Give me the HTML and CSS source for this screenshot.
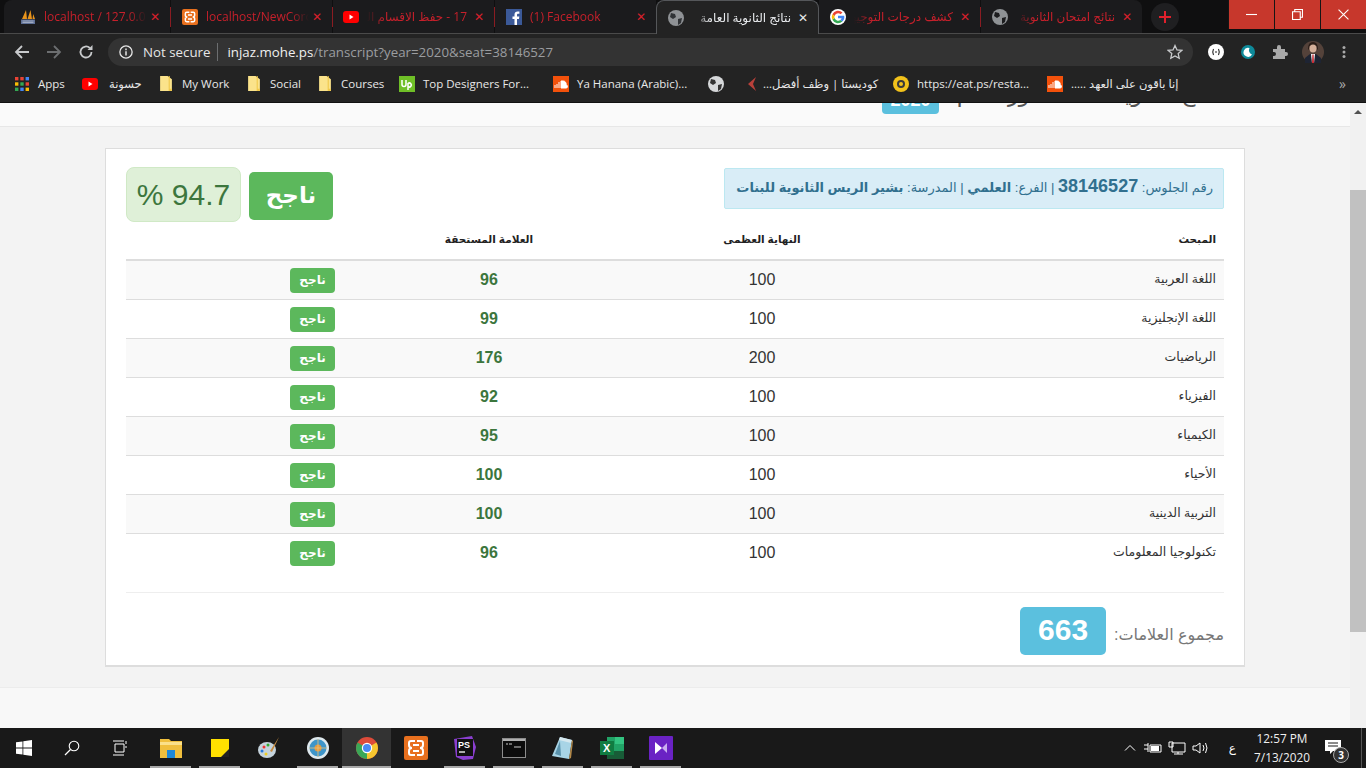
FILE: index.html
```html
<!DOCTYPE html>
<html lang="ar">
<head>
<meta charset="utf-8">
<title>نتائج الثانوية العامة</title>
<link rel="stylesheet" href="styles.css">
</head>
<body>
<div class="browser">
  <div class="tabstrip">
    <div class="tab t1">
      <svg class="fav" viewBox="0 0 16 16"><path d="M2 10 6 1l1 9zM7.500 10l3-9 1.500 9zM12.500 10l.7-5 1.800 5z" fill="#e8941c"/><rect x="1" y="10.500" width="14" height="4.500" fill="#5f7096"/><path d="M2.500 12h11M2.500 13.500h11" stroke="#c9d0de" stroke-width=".6"/></svg>
      <span class="tt">localhost / 127.0.0.1</span><span class="x">✕</span>
    </div>
    <i class="sep"></i>
    <div class="tab t2">
      <svg class="fav" viewBox="0 0 24 24"><rect width="24" height="24" rx="3" fill="#e8701e"/><path d="M11 5H7a2 2 0 0 0-2 2v2a3 3 0 0 0 3 3 3 3 0 0 0-3 3v2a2 2 0 0 0 2 2h4M13 5h4a2 2 0 0 1 2 2v2a3 3 0 0 1-3 3 3 3 0 0 1 3 3v2a2 2 0 0 1-2 2h-4M9 9h6M9 15h6" fill="none" stroke="#fff" stroke-width="2.200"/></svg>
      <span class="tt">localhost/NewCorona</span><span class="x">✕</span>
    </div>
    <i class="sep"></i>
    <div class="tab t3">
      <svg class="fav" viewBox="0 0 16 16"><rect y="2" width="16" height="12" rx="3" fill="#f00"/><path d="M6.500 5.500v5l4-2.500z" fill="#fff"/></svg>
      <span class="tt" dir="rtl">17 - حفظ الاقسام الرئيسية</span><span class="x">✕</span>
    </div>
    <i class="sep"></i>
    <div class="tab t4">
      <svg class="fav" viewBox="0 0 16 16"><rect width="16" height="16" fill="#3b5998"/><path d="M11 16v-6h2l.3-2.500H11V6c0-.8.3-1.200 1.200-1.200h1.200V2.600C13 2.500 12.300 2.500 11.600 2.500 9.800 2.500 8.500 3.600 8.500 5.700v1.800H6.500V10h2v6z" fill="#fff"/></svg>
      <span class="tt">(1) Facebook</span><span class="x">✕</span>
    </div>
    <div class="tab active">
      <svg class="fav" viewBox="0 0 16 16"><circle cx="8" cy="8" r="8" fill="#8f9295"/><path d="M3 3l4 1 1 3-3 2-3-2zM10 9l4-1-1 5-3 2z" fill="#303336"/></svg>
      <span class="tt" dir="rtl">نتائج الثانوية العامة</span><span class="x">✕</span>
    </div>
    <div class="tab t6">
      <svg class="fav" viewBox="0 0 16 16"><circle cx="8" cy="8" r="8" fill="#fff"/><path d="M8 4.300a3.700 3.700 0 0 1 2.600 1L12.500 3.500A6.300 6.300 0 0 0 2.400 5.200l2.200 1.700A3.700 3.700 0 0 1 8 4.300z" fill="#ea4335"/><path d="M4.600 9.100 2.400 10.800a6.300 6.300 0 0 0 10 1.700l-2.100-1.600A3.700 3.700 0 0 1 4.600 9.100z" fill="#34a853"/><path d="M2.400 5.200a6.300 6.300 0 0 0 0 5.600l2.200-1.700a3.700 3.700 0 0 1 0-2.200z" fill="#fbbc05"/><path d="M14.200 6.700H8v2.600h3.600a3 3 0 0 1-1.300 1.600l2.100 1.600a6.200 6.200 0 0 0 1.800-5.800z" fill="#4285f4"/></svg>
      <span class="tt" dir="rtl">كشف درجات التوجيهي</span><span class="x">✕</span>
    </div>
    <i class="sep"></i>
    <div class="tab t7">
      <svg class="fav" viewBox="0 0 16 16"><circle cx="8" cy="8" r="8" fill="#8f9295"/><path d="M3 3l4 1 1 3-3 2-3-2zM10 9l4-1-1 5-3 2z" fill="#1c1c1e"/></svg>
      <span class="tt" dir="rtl">نتائج امتحان الثانوية</span><span class="x">✕</span>
    </div>
    <div class="newtab"><svg viewBox="0 0 12 12"><path d="M6 0v12M0 6h12" stroke="#e0202c" stroke-width="2"/></svg></div>
    <div class="winctl">
      <div class="wbtn"><svg viewBox="0 0 10 10"><path d="M0 5h10" stroke="#fff"/></svg></div>
      <div class="wbtn"><svg viewBox="0 0 10 10"><path d="M2.500 2.500V.5h7v7h-2M.5 2.500h7v7h-7z" fill="none" stroke="#fff"/></svg></div>
      <div class="wbtn"><svg viewBox="0 0 10 10"><path d="M.5.5l9 9M9.500.5l-9 9" stroke="#fff"/></svg></div>
    </div>
  </div>
  <div class="toolbar">
    <svg class="nav" viewBox="0 0 16 16"><path d="M15 8H2M8 2 2 8l6 6" fill="none" stroke="#c8cacc" stroke-width="1.800"/></svg>
    <svg class="nav" viewBox="0 0 16 16"><path d="M1 8h13M8 2l6 6-6 6" fill="none" stroke="#6c6e70" stroke-width="1.800"/></svg>
    <svg class="nav" viewBox="0 0 16 16"><path d="M13.500 8a5.500 5.500 0 1 1-1.700-4" fill="none" stroke="#c8cacc" stroke-width="1.800"/><path d="M14.500 1v5h-5z" fill="#c8cacc"/></svg>
    <div class="omnibox">
      <svg class="info" viewBox="0 0 16 16"><circle cx="8" cy="8" r="7" fill="none" stroke="#e6e6e6" stroke-width="1.500"/><path d="M8 7v5M8 4v2" stroke="#e6e6e6" stroke-width="1.700"/></svg>
      <span class="secure">Not secure</span>
      <i class="osep"></i>
      <span class="url"><b>injaz.mohe.ps</b>/transcript?year=2020&amp;seat=38146527</span>
      <svg class="star" viewBox="0 0 16 16"><path d="M8 1.500l2 4.400 4.800.5-3.600 3.200 1 4.700L8 11.900l-4.200 2.400 1-4.700L1.200 6.400 6 5.900z" fill="none" stroke="#c8cacc" stroke-width="1.300"/></svg>
    </div>
    <div class="exts">
      <svg class="ext" viewBox="0 0 16 16"><circle cx="8" cy="8" r="8" fill="#fff"/><path d="M5.500 5Q4 8 5.500 11M10.500 5Q12 8 10.500 11M7 8h2" fill="none" stroke="#222" stroke-width="1.100"/></svg>
      <svg class="ext" viewBox="0 0 16 16"><circle cx="8" cy="8" r="7" fill="#0e8a9a"/><path d="M9.500 4a4.500 4.500 0 1 0 2.500 6.500A4.500 4.500 0 0 1 9.500 4z" fill="#fff"/></svg>
      <svg class="ext" viewBox="0 0 16 16"><path d="M1 5h4V3a2 2 0 0 1 4 0v2h4v3h1a2 2 0 0 1 0 4h-1v3H1v-3h1a2 2 0 0 0 0-4H1z" fill="#a9a9a9"/></svg>
      <svg class="avatar" viewBox="0 0 22 22"><circle cx="11" cy="11" r="11" fill="#54423a"/><path d="M6 8Q6 1 11 1t5 7l-1 1V5H7v4z" fill="#2c1e18"/><ellipse cx="11" cy="7.500" rx="3.500" ry="4" fill="#d5b09a"/><path d="M3 22v-5l5-4h6l5 4v5z" fill="#1e2433"/><path d="M9 13h4l-1 9h-2z" fill="#fff"/><path d="M10.400 13.500h1.200l.4 8.500h-2z" fill="#c4262e"/></svg>
      <svg class="dots" viewBox="0 0 4 12"><circle cx="2" cy="1.500" r="1.500" fill="#aaa"/><circle cx="2" cy="6" r="1.500" fill="#aaa"/><circle cx="2" cy="10.500" r="1.500" fill="#aaa"/></svg>
    </div>
  </div>
  <div class="bookmarks">
    <div class="bm b-apps">
      <svg class="bi" viewBox="0 0 14 14"><rect width="3.400" height="3.400" fill="#ea4335"/><rect x="5.300" width="3.400" height="3.400" fill="#ea4335"/><rect x="10.600" width="3.400" height="3.400" fill="#4285f4"/><rect y="5.300" width="3.400" height="3.400" fill="#fbbc05"/><rect x="5.300" y="5.300" width="3.400" height="3.400" fill="#34a853"/><rect x="10.600" y="5.300" width="3.400" height="3.400" fill="#ea4335"/><rect y="10.600" width="3.400" height="3.400" fill="#34a853"/><rect x="5.300" y="10.600" width="3.400" height="3.400" fill="#4285f4"/><rect x="10.600" y="10.600" width="3.400" height="3.400" fill="#fbbc05"/></svg>
      Apps
    </div>
    <div class="bm b-yt"><svg class="bi" viewBox="0 0 16 16"><rect y="2" width="16" height="12" rx="3" fill="#f00"/><path d="M6.500 5.500v5l4-2.500z" fill="#fff"/></svg><span dir="rtl">حسونة</span></div>
    <div class="bm b-work"><svg class="bf" viewBox="0 0 11 14"><path d="M0 0h7l4 3v11H0z" fill="#fbe38b"/><path d="M8 0h1v12h2v2H8z" fill="#f0c84a"/></svg>My Work</div>
    <div class="bm b-soc"><svg class="bf" viewBox="0 0 11 14"><path d="M0 0h7l4 3v11H0z" fill="#fbe38b"/><path d="M8 0h1v12h2v2H8z" fill="#f0c84a"/></svg>Social</div>
    <div class="bm b-cou"><svg class="bf" viewBox="0 0 11 14"><path d="M0 0h7l4 3v11H0z" fill="#fbe38b"/><path d="M8 0h1v12h2v2H8z" fill="#f0c84a"/></svg>Courses</div>
    <div class="bm b-up"><svg class="bi" viewBox="0 0 16 16"><rect width="16" height="16" fill="#6fbf27"/><path d="M3 4v4.500a2 2 0 0 0 4 0V4M9 14V7.500a2 2 0 1 1 0 3" fill="none" stroke="#fff" stroke-width="1.500"/></svg>Top Designers For...</div>
    <div class="bm b-sc1"><svg class="bi" viewBox="0 0 16 16"><rect width="16" height="16" fill="#f3510b"/><path d="M2 9v3M4 8v4M6 6v6M8 5h2a3 3 0 0 1 3 4 1.500 1.500 0 0 1 0 3H8z" stroke="#fff" fill="#fff"/></svg>Ya Hanana (Arabic)...</div>
    <div class="bm b-glo"><svg class="bi" viewBox="0 0 16 16"><circle cx="8" cy="8" r="8" fill="#d6d8da"/><path d="M3 3l4 1 1 3-3 2-3-2zM10 9l4-1-1 5-3 2z" fill="#333"/></svg></div>
    <div class="bm b-cod"><svg class="bc" viewBox="0 0 10 16"><path d="M9 1 1 8l8 7-3-7z" fill="#b8403a"/></svg><span dir="rtl">كوديستا | وظف أفضل...</span></div>
    <div class="bm b-eat"><svg class="bi" viewBox="0 0 16 16"><circle cx="8" cy="8" r="8" fill="#f2c21b"/><circle cx="8" cy="8" r="4" fill="#3a3a3a"/><circle cx="8" cy="8" r="2" fill="#f2c21b"/></svg>https://eat.ps/resta...</div>
    <div class="bm b-sc2"><svg class="bi" viewBox="0 0 16 16"><rect width="16" height="16" fill="#f3510b"/><path d="M2 9v3M4 8v4M6 6v6M8 5h2a3 3 0 0 1 3 4 1.500 1.500 0 0 1 0 3H8z" stroke="#fff" fill="#fff"/></svg><span dir="rtl">إنا باقون على العهد .....</span></div>
    <div class="more">»</div>
  </div>
</div>

<div class="viewport">
  <div class="page">
    <div class="headline">
      <span class="yearbadge">2020</span>
      <h1 dir="rtl">نتائج الثانوية العامة لدورة عام</h1>
    </div>
    <main class="card" dir="rtl">
      <div class="top">
        <div class="alert">رقم الجلوس: <b class="seat">38146527</b> | الفرع: <b>العلمي</b> | المدرسة: <b>بشير الريس الثانوية للبنات</b></div>
        <div class="result">
          <span class="bigpass">ناجح</span>
          <span class="pct" dir="ltr">% 94.7</span>
        </div>
      </div>
      <table class="marks">
        <thead><tr><th class="c1">المبحث</th><th class="c2">النهاية العظمى</th><th class="c3">العلامة المستحقة</th><th class="c4"></th></tr></thead>
        <tbody>
          <tr><td class="sub">اللغة العربية</td><td class="max">100</td><td class="got">96</td><td class="st"><span class="pass">ناجح</span></td></tr>
          <tr><td class="sub">اللغة الإنجليزية</td><td class="max">100</td><td class="got">99</td><td class="st"><span class="pass">ناجح</span></td></tr>
          <tr><td class="sub">الرياضيات</td><td class="max">200</td><td class="got">176</td><td class="st"><span class="pass">ناجح</span></td></tr>
          <tr><td class="sub">الفيزياء</td><td class="max">100</td><td class="got">92</td><td class="st"><span class="pass">ناجح</span></td></tr>
          <tr><td class="sub">الكيمياء</td><td class="max">100</td><td class="got">95</td><td class="st"><span class="pass">ناجح</span></td></tr>
          <tr><td class="sub">الأحياء</td><td class="max">100</td><td class="got">100</td><td class="st"><span class="pass">ناجح</span></td></tr>
          <tr><td class="sub">التربية الدينية</td><td class="max">100</td><td class="got">100</td><td class="st"><span class="pass">ناجح</span></td></tr>
          <tr><td class="sub">تكنولوجيا المعلومات</td><td class="max">100</td><td class="got">96</td><td class="st"><span class="pass">ناجح</span></td></tr>
        </tbody>
      </table>
      <div class="total"><span class="tlabel">مجموع العلامات:</span><span class="tbadge">663</span></div>
    </main>
    <div class="foot"></div>
  </div>
  <div class="scrollbar">
    <div class="arrow"></div>
    <div class="thumb"></div>
  </div>
</div>

<div class="taskbar">
  <svg class="tk start" viewBox="0 0 16 16"><path d="M0 2.300 6.500 1.400v6.200H0zM7.300 1.300 16 0v7.600H7.300zM0 8.400h6.500v6.200L0 13.700zM7.300 8.400H16V16l-8.700-1.300z" fill="#fff"/></svg>
  <svg class="tk search" viewBox="0 0 16 16"><circle cx="10" cy="6" r="4.800" fill="none" stroke="#fff" stroke-width="1.100"/><path d="M6.500 9.500 1 15" stroke="#fff" stroke-width="1.200"/></svg>
  <svg class="tk tview" viewBox="0 0 16 16"><path d="M3 4h9v8H3zM1 1h11M1 15h11M14 1v3M14 6v2" fill="none" stroke="#fff"/></svg>
  <div class="apps">
    <div class="app on"><svg viewBox="0 0 24 24"><path d="M1 3h9l2 2h11v17H1z" fill="#f0bf3e"/><rect x="1" y="6" width="22" height="3" fill="#fbe08a"/><rect x="8" y="14" width="8" height="8" fill="#1e88d8"/></svg></div>
    <div class="app on"><svg viewBox="0 0 24 24"><rect x="3" y="3" width="18" height="18" fill="#ffe000"/><path d="M21 13v8h-8z" fill="#222"/></svg></div>
    <div class="app"><svg viewBox="0 0 24 24"><ellipse cx="10" cy="14" rx="9" ry="8" fill="#c5d3dc"/><circle cx="7" cy="11" r="1.500" fill="#e33"/><circle cx="11" cy="9" r="1.500" fill="#3a3"/><circle cx="5" cy="15" r="1.500" fill="#27d"/><circle cx="9" cy="18" r="1.500" fill="#ec2"/><path d="M22 1l-7 15-2-1z" fill="#c68a3f"/></svg></div>
    <div class="app on"><svg viewBox="0 0 24 24"><circle cx="12" cy="12" r="11" fill="#dfe9ee"/><circle cx="12" cy="12" r="8.500" fill="#3e95c9"/><circle cx="12" cy="12" r="3.500" fill="#e89a3c"/><path d="M12 3v18M3 12h18" stroke="#e8c27a" stroke-width=".8"/></svg></div>
    <div class="app on cur"><svg viewBox="0 0 24 24"><circle cx="12" cy="12" r="11" fill="#dd4b3a"/><path d="M12 12 21.500 6.500A11 11 0 0 1 12 23z" fill="#f7c62f"/><path d="M12 12 12 23A11 11 0 0 1 2.500 6.500z" fill="#3aa757"/><circle cx="12" cy="12" r="5.200" fill="#fff"/><circle cx="12" cy="12" r="4" fill="#4a8af4"/></svg></div>
    <div class="app"><svg viewBox="0 0 24 24"><rect width="24" height="24" rx="2" fill="#e8701e"/><path d="M11 5H7a2 2 0 0 0-2 2v2a3 3 0 0 0 3 3 3 3 0 0 0-3 3v2a2 2 0 0 0 2 2h4M13 5h4a2 2 0 0 1 2 2v2a3 3 0 0 1-3 3 3 3 0 0 1 3 3v2a2 2 0 0 1-2 2h-4M9 9h6M9 15h6" fill="none" stroke="#fff" stroke-width="2"/></svg></div>
    <div class="app on"><svg viewBox="0 0 24 24"><path d="M1 3 19 0l4 11-3 12-10 1-7-3z" fill="#8a3fd0"/><rect x="4" y="3" width="16" height="17" fill="#111"/><text class="pstext" x="5" y="12">PS</text><path d="M6 16h6" stroke="#fff" stroke-width="1.300"/></svg></div>
    <div class="app on"><svg viewBox="0 0 24 24"><rect x=".5" y="2.500" width="23" height="19" fill="#0c0c0c" stroke="#8c8c8c"/><rect x="1" y="3" width="22" height="2" fill="#b0b0b0"/><path d="M4 8h2M7 8h3M12 11h7" stroke="#ccc"/></svg></div>
    <div class="app on"><svg viewBox="0 0 24 24"><path d="M9 1l12 3-3 19L1 20z" fill="#a8d4e6"/><path d="M9 1l12 3-1 3L8 4z" fill="#d5e8ef"/><path d="M9 5 4 18l6 2z" fill="#5b93ad"/><path d="M21 4 18 23l2-1 2-17z" fill="#b58a4a"/></svg></div>
    <div class="app on"><svg viewBox="0 0 24 24"><rect x="7" y="1" width="17" height="22" fill="#21a366"/><rect x="15" y="1" width="9" height="7" fill="#33c481"/><rect x="7" y="15" width="17" height="8" fill="#185c37"/><rect x="0" y="5" width="14" height="14" fill="#107c41"/><text class="xltext" x="3" y="16">X</text></svg></div>
    <div class="app on"><svg viewBox="0 0 24 24"><rect width="24" height="24" rx="1" fill="#6a22c4"/><path d="M6 6v12l7-6z" fill="#fff"/><path d="M13 12l5-5v10z" fill="#c9aef0"/></svg></div>
  </div>
  <div class="tray">
    <svg class="ti" viewBox="0 0 12 12"><path d="M1 8.500 6 3.500l5 5" fill="none" stroke="#fff"/></svg>
    <svg class="ti w" viewBox="0 0 18 12"><path d="M6 3h11v7H6zM0 3h4M0 7h4M4 1v9" fill="none" stroke="#fff"/><rect x="7" y="4" width="8" height="5" fill="#fff"/></svg>
    <svg class="ti w" viewBox="0 0 18 14"><path d="M4 2h13v9H4zM1 1h4v5H1zM10 11v2M6 13h9" fill="#191919" stroke="#fff"/></svg>
    <svg class="ti w" viewBox="0 0 18 14"><path d="M1 5h3l4-3v10L4 9H1zM11 4q2 3 0 6M13.500 2q3 5 0 10" fill="none" stroke="#fff"/></svg>
    <span class="lang">ع</span>
    <div class="clock"><span>12:57 PM</span><span>7/13/2020</span></div>
    <div class="notif">
      <svg viewBox="0 0 16 15"><path d="M0 0h16v11H8l-3 3v-3H0z" fill="#fff"/><path d="M3 3h10M3 6h10" stroke="#191919"/></svg>
      <span class="count">3</span>
    </div>
    <i class="peek"></i>
  </div>
</div>
</body>
</html>
```
FILE: styles.css
```css
* { box-sizing: border-box; }
html, body { margin: 0; padding: 0; height: 100%; overflow: hidden; }
body { width: 1366px; height: 768px; display: flex; flex-direction: column; font-family: "Liberation Sans", "DejaVu Sans", sans-serif; background: #f3f3f3; }
svg { display: block; flex: none; }

.browser { flex: none; height: 103px; background: #232323; display: flex; flex-direction: column; position: relative; z-index: 2; border-bottom: 1px solid #111; }
.tabstrip { flex: none; height: 33px; background: #0f0f10; display: flex; align-items: center; font: 12px "Open Sans", "DejaVu Sans", sans-serif; }
.tab { height: 33px; display: flex; align-items: center; flex: none; color: #c6202b; background: #1b1b1d; padding-left: 11px; }
.tab .fav { width: 16px; height: 16px; margin-right: 8px; }
.tt { flex: 1; overflow: hidden; white-space: nowrap; min-width: 0; -webkit-mask-image: linear-gradient(to right, #000 82%, transparent); mask-image: linear-gradient(to right, #000 82%, transparent); }
.tt[dir="rtl"] { padding-right: 4px; -webkit-mask-image: linear-gradient(to left, #000 82%, transparent); mask-image: linear-gradient(to left, #000 82%, transparent); }
.x { width: 16px; text-align: center; font-size: 12px; color: #d8202c; flex: none; margin-right: 7px; }
.t1 { width: 166px; margin-left: 4px; padding-left: 16px; border-radius: 8px 0 0 0; }
.t2, .t3, .t4, .t6, .t7 { width: 161px; }
.t3 { padding-left: 10px; }
.t7 { border-radius: 0 8px 0 0; }
.sep { width: 1px; height: 20px; background: #8a1c22; flex: none; position: relative; }
.active { width: 163px; height: 34px; align-self: flex-start; background: #232323; color: #e8eaed; border-radius: 8px 8px 0 0; border: 1px solid #55575a; border-bottom: 0; position: relative; z-index: 1; }
.active .x { color: #e8eaed; }
.newtab { width: 28px; height: 28px; margin-left: 9px; background: #1f1f21; border-radius: 50%; display: flex; align-items: center; justify-content: center; }
.newtab svg { width: 12px; height: 12px; }
.winctl { margin-left: auto; display: flex; height: 29px; align-self: flex-start; }
.wbtn { width: 46px; height: 29px; background: #c7372c; display: flex; align-items: center; justify-content: center; border-left: 1px solid #151515; }
.wbtn svg { width: 11px; height: 11px; }

.toolbar { flex: none; height: 36px; background: #232323; border-top: 1px solid #4a4a4a; display: flex; align-items: center; padding-left: 14px; }
.nav { width: 16px; height: 16px; margin-right: 16px; }
.omnibox { width: 1085px; margin-left: -2px; height: 28px; background: #333; border-radius: 14px; display: flex; align-items: center; padding: 0 10px 0 11px; font: 13.300px/28px "Open Sans", "Liberation Sans", sans-serif; color: #9b9da0; }
.info { width: 14px; height: 14px; margin-right: 10px; }
.secure { color: #e6e6e6; }
.osep { width: 1px; height: 18px; background: #6c6e70; margin: 0 9px 0 7px; }
.url { flex: 1; white-space: nowrap; }
.url b { font-weight: 400; color: #f0f0f0; }
.star { width: 16px; height: 16px; }
.exts { display: flex; align-items: center; margin-left: 15px; }
.ext { width: 16px; height: 16px; margin-right: 16px; }
.avatar { width: 22px; height: 22px; margin: 0 18px 0 -2px; }
.dots { width: 4px; height: 12px; }

.bookmarks { flex: 1; background: #232323; font: 11.500px "Open Sans", "DejaVu Sans", sans-serif; color: #e8e8e8; display: flex; align-items: center; padding: 0 0 4px 15px; white-space: nowrap; }
.bm { display: flex; align-items: center; flex: none; }
.bi { width: 16px; height: 16px; margin-right: 8px; }
.bf { width: 12px; height: 15px; margin-right: 10px; }
.bc { width: 10px; height: 16px; margin-right: 6px; }
.b-apps { width: 67px; }
.b-apps .bi { width: 14px; height: 14px; margin-right: 9px; }
.b-yt { width: 78px; }
.b-yt .bi { margin-right: 11px; }
.b-work { width: 88px; }
.b-soc { width: 71px; }
.b-cou { width: 80px; }
.b-up { width: 154px; }
.b-sc1 { width: 155px; }
.b-glo { width: 39px; }
.b-cod { width: 146px; }
.b-eat { width: 154px; }
.b-sc2 { width: 140px; }
.more { margin-left: auto; margin-right: 20px; font-size: 14px; color: #aaa; }

.viewport { flex: 1; display: flex; overflow: hidden; min-height: 0; background: #f3f3f3; }
.page { flex: 1; min-width: 0; display: flex; flex-direction: column; align-items: center; }
.headline { align-self: stretch; flex: none; height: 49px; margin-top: -25px; background: #fafafa; border-bottom: 1px solid #e7e7e7; display: flex; align-items: flex-start; padding: 2px 0 0 882px; gap: 12px; }
.yearbadge { width: 57px; height: 34px; background: #5bc0de; color: #fff; border-radius: 0 0 4px 4px; font: 700 18px/40px "Liberation Sans", sans-serif; text-align: center; overflow: hidden; }
.headline h1 { margin: 0; font: 400 22px/30px "Liberation Sans", "DejaVu Sans", sans-serif; color: #555; width: 270px; white-space: nowrap; }

.card { width: 1140px; height: 519px; margin-top: 21px; background: #fff; border: 1px solid #ddd; border-bottom-width: 2px; padding: 18px 20px 0; flex: none; }
.top { display: flex; justify-content: space-between; align-items: flex-start; height: 59px; }
.alert { width: 500px; height: 41px; margin-top: 1px; background: #d9edf7; border: 1px solid #bce8f1; border-radius: 2px; color: #31708f; font-size: 13px; line-height: 35px; padding: 0 10px; white-space: nowrap; overflow: hidden; }
.seat { font-size: 18px; }
.result { display: flex; align-items: flex-start; gap: 8px; }
.bigpass { width: 84px; height: 48px; margin-top: 5px; background: #5cb85c; color: #fff; border-radius: 5px; font: 700 23px/46px "Liberation Sans", "DejaVu Sans", sans-serif; text-align: center; }
.pct { width: 115px; height: 55px; background: #dff0d8; border: 1px solid #d0e9c6; border-radius: 8px; color: #3c763d; font-size: 30px; line-height: 53px; text-align: center; }

.marks { width: 1098px; border-collapse: collapse; table-layout: fixed; font-size: 14px; color: #333; }
.c1 { width: 335px; }
.c2 { width: 254px; }
.c3 { width: 292px; }
.c4 { width: 217px; }
.marks th { height: 34px; font-size: 10.500px; font-weight: 700; color: #222; border-bottom: 2px solid #ddd; text-align: center; padding: 0 0 8px; }
.marks th.c1 { text-align: right; padding-right: 8px; }
.marks td { height: 39px; border-bottom: 1px solid #ddd; padding: 0; }
.marks tbody tr:nth-child(odd) td { background: #f9f9f9; }
.marks tbody tr:last-child td { border-bottom: 0; }
.marks .sub { text-align: right; padding: 0 8px 2px 0; font-size: 12.500px; color: #333; }
.marks .max { text-align: center; font-size: 16px; color: #333; }
.marks .got { text-align: center; font-size: 16px; font-weight: 700; color: #3c763d; }
.pass { display: block; width: 45px; height: 25px; margin: 1px 8px 0 0; background: #5cb85c; color: #fff; border-radius: 4px; font-size: 12px; font-weight: 700; line-height: 24px; text-align: center; }

.total { margin-top: 20px; border-top: 1px solid #eee; padding-top: 14px; display: flex; align-items: center; gap: 8px; }
.tlabel { font-size: 16px; color: #777; margin-top: 6px; }
.tbadge { width: 86px; height: 48px; background: #5bc0de; color: #fff; border-radius: 5px; font-size: 30px; font-weight: 700; line-height: 46px; text-align: center; }

.foot { align-self: stretch; flex: 1; margin-top: 20px; border-top: 1px solid #ececec; background: #f8f8f8; }

.scrollbar { width: 16px; flex: none; background: #f1f1f1; display: flex; flex-direction: column; align-items: center; }
.arrow { width: 0; height: 0; border: 4px solid transparent; border-bottom-color: #505050; border-top: 0; margin-top: 7px; }
.thumb { width: 16px; height: 442px; margin-top: 76px; background: #c1c1c1; }

.taskbar { flex: none; height: 40px; background: #191919; display: flex; align-items: center; color: #fff; }
.tk { flex: none; }
.start { width: 16px; height: 16px; margin-left: 16px; }
.search { width: 16px; height: 16px; margin-left: 32px; }
.tview { width: 16px; height: 16px; margin-left: 32px; }
.apps { display: flex; height: 40px; margin-left: 18px; }
.app { width: 49px; height: 40px; display: flex; align-items: center; justify-content: center; position: relative; }
.app svg { width: 24px; height: 24px; }
.app.on::after { content: ""; position: absolute; left: 4px; right: 4px; bottom: 0; height: 2px; background: #a8a8a8; }
.app.cur { background: #333; }
.app.cur::after { left: 0; right: 0; }
.pstext { font: 700 9px "Liberation Sans", sans-serif; fill: #fff; }
.xltext { font: 700 11px "Liberation Sans", sans-serif; fill: #fff; }
.tray { margin-left: auto; display: flex; align-items: center; height: 40px; }
.ti { width: 12px; height: 12px; margin-right: 8px; }
.ti.w { width: 18px; height: 14px; margin-right: 6px; }
.lang { font: 12px "DejaVu Sans", sans-serif; margin: 0 12px 0 13px; }
.clock { display: flex; flex-direction: column; align-items: center; font: 11.800px/19px "Open Sans", sans-serif; width: 68px; color: #f0f0f0; }
.notif { width: 45px; height: 40px; position: relative; display: flex; align-items: center; padding-left: 9px; }
.notif svg { width: 16px; height: 15px; margin-top: -2px; }
.count { position: absolute; right: 12px; top: 19px; width: 16px; height: 16px; border-radius: 50%; background: #333; border: 1px solid #aaa; font: 700 10px/14px "Open Sans", sans-serif; text-align: center; }
.peek { width: 1px; height: 40px; background: #555; margin-right: 4px; }
```
